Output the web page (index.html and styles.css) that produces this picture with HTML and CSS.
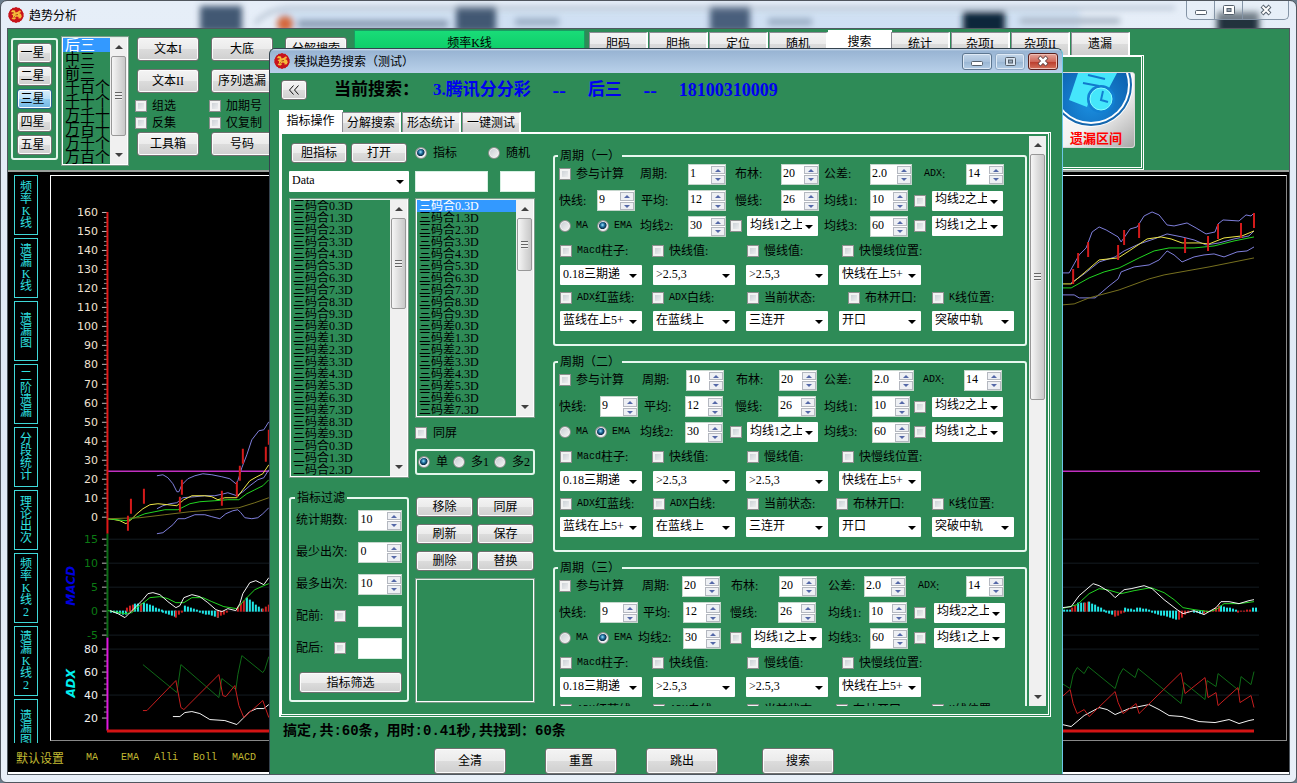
FILE: index.html
```html
<!DOCTYPE html>
<html lang="zh-CN">
<head>
<meta charset="utf-8">
<title>趋势分析</title>
<link rel="stylesheet" href="styles.css">
</head>
<body>
<svg class="defs" width="0" height="0" aria-hidden="true">
  <symbol id="logo" viewBox="0 0 16 16">
    <circle cx="8" cy="8" r="7.6" fill="#c8141c"/>
    <path d="M8 0l1.500 1 1.800-.2 1 1.500 1.700.8.3 1.900 1.300 1.300-.5 1.700.5 1.700-1.300 1.400-.3 1.800-1.700.8-1 1.500-1.800-.2L8 16l-1.500-1-1.800.2-1-1.500-1.700-.8-.3-1.800L.4 9.700.9 8 .4 6.300 1.700 5 2 3.100l1.700-.8 1-1.500 1.800.2z" fill="#c8141c"/>
    <path d="M3 4.500l1.500-1.500 2.500.5.5 2 2-.5 2-1.500 1.500.5-.5 1.500-1.500.5 2 1 .8 2.500-1.300 2-2.500-.2.8-1.300-2.300-.5-1.500 1.300 1 .7-1.500 1-3-.5 1.500-2L5 8.300 3.500 7.500l1.500-1z" fill="#f6b93a"/>
    <path d="M4 5.500l2 .5M7.500 8l2.500-.5M5.500 10.500l1.500-1" stroke="#8a1a10" stroke-width=".7"/>
  </symbol>
</svg>
<main class="window">
  <header class="titlebar">
    <svg class="glass" aria-hidden="true">
      <filter id="soft" x="-50%" y="-50%" width="200%" height="200%"><feGaussianBlur stdDeviation="3"/></filter>
      <rect y="10" x="280" width="800" height="30" fill="#bdd5ee" opacity=".55" filter="url(#soft)"/>
      <g filter="url(#soft)">
        <rect x="200" y="6" width="42" height="26" fill="#435873"/>
        <rect x="456" y="6" width="40" height="26" fill="#435873"/>
        <rect x="710" y="6" width="40" height="26" fill="#4a5f7c"/>
        <rect x="963" y="12" width="42" height="22" fill="#10283a"/>
        <rect x="1217" y="12" width="42" height="22" fill="#22323d"/>
        <circle cx="285" cy="24" r="8" fill="#d4663a"/>
        <rect x="298" y="20" width="150" height="8" fill="#8b9db4"/>
        <rect x="515" y="18" width="44" height="8" fill="#9db0c6"/>
        <rect x="768" y="18" width="44" height="8" fill="#9db0c6"/>
        <rect x="1020" y="18" width="100" height="6" fill="#a8b5c4"/>
        <path d="M255 24q12-16 40-16h880" fill="none" stroke="#8d9db0" stroke-width="2"/>
      </g>
    </svg>
    <svg class="logo" aria-hidden="true"><use href="#logo"/></svg>
    <h1>趋势分析</h1>
    <div class="caption main-caption">
      <button aria-label="最小化"><svg viewBox="0 0 14 12"><rect x="1.500" y="6.500" width="11" height="4" rx="1" fill="#fff" stroke="#55606c"/></svg></button>
      <button aria-label="最大化"><svg viewBox="0 0 14 12"><rect x="1.500" y="1.500" width="11" height="9" rx="1" fill="#fff" stroke="#55606c"/><rect x="5" y="4.500" width="4" height="3" fill="#9aa6b4" stroke="#55606c"/></svg></button>
      <button class="wide" aria-label="关闭"><svg viewBox="0 0 14 12"><path d="M3 2l8 8M11 2l-8 8" stroke="#55606c" stroke-width="4"/><path d="M3.500 2.500l7 7M10.500 2.500l-7 7" stroke="#fff" stroke-width="2"/></svg></button>
    </div>
  </header>

  <div class="client">
    <section class="toolbar">
      <div class="stars">
        <button>一星</button><button>二星</button><button class="on">三星</button><button>四星</button><button>五星</button>
      </div>
      <div class="listbox positions">
        <ul role="listbox" aria-label="位置">
          <li class="sel">后三</li><li>中三</li><li>前三</li><li>千百个</li><li>千十个</li><li>万千十</li><li>万百十</li><li>万千个</li><li>万百个</li>
        </ul>
        <div class="scroll thumb-pos"><i class="up"></i><b></b><i class="down"></i></div>
      </div>
      <div class="tools">
        <button>文本I</button><button>文本II</button>
        <div class="checks"><label><input type="checkbox">组选</label><label><input type="checkbox">反集</label></div>
        <button>工具箱</button>
      </div>
      <div class="tools">
        <button>大底</button><button>序列遗漏</button>
        <div class="checks"><label><input type="checkbox">加期号</label><label><input type="checkbox">仅复制</label></div>
        <button>号码</button>
      </div>
      <div class="tools narrow"><button>分解搜索</button></div>
      <button class="green-bar">频率K线</button>
      <div class="tabset top-tabs">
        <nav class="tabs">
          <button>胆码</button><button>胆拖</button><button>定位</button><button>随机</button><button class="current">搜索</button><button>统计</button><button>杂项I</button><button>杂项II</button><button>遗漏</button>
        </nav>
        <div class="tabpanel">
          <button class="picture">
            <svg viewBox="0 0 90 74" preserveAspectRatio="xMaxYMin slice" aria-hidden="true">
              <defs>
                <linearGradient id="metal" x1="0" y1="0" x2="1" y2="1"><stop offset="0" stop-color="#fff"/><stop offset=".6" stop-color="#f2f2f2"/><stop offset="1" stop-color="#a8a8a8"/></linearGradient>
                <radialGradient id="blue" cx=".5" cy=".75" r=".7"><stop offset="0" stop-color="#1b8fe0"/><stop offset="1" stop-color="#0a5aa8"/></radialGradient>
              </defs>
              <rect width="90" height="74" fill="url(#metal)"/>
              <circle cx="47" cy="12" r="42" fill="#fff"/>
              <circle cx="47" cy="12" r="41" fill="#1467ae"/>
              <circle cx="47" cy="12" r="39" fill="#fff"/>
              <circle cx="47" cy="12" r="37" fill="url(#blue)"/>
              <path d="M34 0H73L65 15H49L43 34 25 27z" fill="#45e6fb"/>
              <path d="M44 2l17 4M39 10l16 3" stroke="#1179cc" stroke-width="2"/>
              <circle cx="57" cy="26" r="14" fill="#127fd2"/>
              <circle cx="57" cy="26" r="11" fill="#45e6fb" stroke="#8ff" stroke-width="1"/>
              <path d="M59 18l-2 9 7 2" fill="none" stroke="#127fd2" stroke-width="2"/>
            </svg>
            <span>遗漏区间</span>
          </button>
        </div>
      </div>
    </section>

    <section class="workspace">
      <nav class="side">
        <button>频率K线</button><button>遗漏K线</button><button>遗漏图</button><button>二阶遗漏</button><button>分段统计</button><button>理论出次</button><button class="tall">频率K线2</button><button class="tall">遗漏K线2</button><button class="cut">遗漏图</button>
      </nav>
      <div class="chart">
        <svg id="plot" viewBox="51 176 1236 566" preserveAspectRatio="xMinYMin meet" role="img" aria-label="走势图">
          <g stroke="#141c22"><path d="M109 539.500H1260M109 563.500H1260M109 587.500H1260M109 611.500H1260M109 635.500H1260M109 649.500H1260M109 695.500H1260"/></g>
          <path d="M108 471.500H1261" stroke="#c030c0" stroke-width="1.500"/>
          <g id="axis"></g>
          <path d="M107.500 212V534" stroke="#e01818" stroke-width="2"/>
          <path d="M107.500 534V638" stroke="#0b6a14" stroke-width="2"/>
          <path d="M107.500 638V731" stroke="#e018e0" stroke-width="2"/>
          <path d="M107 731.500H1255" stroke="#d41414" stroke-width="3"/>
          <g id="bars"></g>
          <g class="lines">
            <g stroke="#7f7fdc">
              <polyline points="157,476 163,475 168,478 173,484 177,492 179,492 182,485 188,479 195,476 203,474 212,475 222,477 230,479 236,484 238,481 242,468 247,455 252,440 259,431 264,430 269,422"/>
              <polyline points="157,509 163,506 170,504 177,503 183,498 195,497 205,496 215,496 224,494 228,493 237,496 243,492 250,486 258,480 264,478 269,470"/>
              <polyline points="157,534 163,533 168,529 173,525 178,519 185,519 195,515 205,515 212,517 220,519 226,514 233,511 238,510 241,513 245,518 252,519 258,518 263,514 269,508"/>
              <polyline points="1063,273 1070,273 1075,264 1080,255 1087,248 1093,232 1100,227 1107,230 1119,237 1122,242 1131,229 1138,227 1145,216 1153,212 1160,215 1168,225 1175,226 1188,223 1197,228 1207,234 1216,232 1219,224 1224,220 1240,221 1247,215 1252,216 1255,213"/>
              <polyline points="1072,283 1085,274 1100,262 1116,257 1125,251 1140,244 1155,239 1168,234 1183,237 1195,240 1207,245 1220,243 1235,239 1250,236 1255,231"/>
              <polyline points="1063,295 1075,295 1080,298 1096,298 1103,292 1110,286 1119,279 1122,272 1135,267 1150,265 1160,260 1168,251 1175,255 1183,262 1195,257 1205,255 1215,254 1225,257 1238,252 1248,251 1255,247"/>
            </g>
            <g stroke="#f0e848">
              <polyline points="108,519 115,520 120,521 126,524 131,520 137,514 143,509 150,505 158,504 168,505 177,506 184,500 192,496 205,496 212,497 218,500 225,498 237,498 243,490 250,481 257,477 263,474 269,465"/>
              <polyline points="1063,284 1072,284 1085,273 1100,260 1119,258 1130,251 1148,239 1162,237 1172,239 1183,243 1200,243 1210,244 1225,238 1243,236 1255,231"/>
            </g>
            <g stroke="#22d622">
              <polyline points="108,519 126,521 135,518 145,514 155,512 165,510 178,510 190,504 200,502 215,501 228,500 239,500 247,494 255,490 263,486 269,480"/>
              <polyline points="1063,288 1072,288 1090,278 1105,272 1120,268 1140,258 1155,251 1170,248 1195,248 1215,246 1235,241 1255,237"/>
              <polyline points="108,611 125,614 132,613 137,608 145,602 150,598 160,597 168,599 176,603 184,603 192,598 203,598 212,602 224,607 237,609 245,600 255,590 264,586 269,584"/>
              <polyline points="1063,609 1078,605 1090,594 1100,589 1108,590 1122,594 1135,591 1152,588 1165,593 1175,600 1184,608 1195,610 1210,612 1217,610 1225,604 1240,604 1255,602"/>
            </g>
            <g stroke="#77701f">
              <polyline points="108,519 140,518 165,515 190,512 215,510 239,508 255,503 269,498"/>
              <polyline points="1063,305 1075,304 1090,298 1120,290 1150,279 1165,275 1210,267 1255,258"/>
            </g>
            <g stroke="#f4f4f4">
              <polyline points="110,611 118,614 125,618 130,613 137,606 143,600 148,594 153,593 160,595 168,602 176,608 180,606 184,598 192,595 200,597 208,603 216,610 222,612 228,609 236,611 240,604 243,594 250,583 256,581 260,583 264,585 269,578"/>
              <polyline points="1063,608 1072,607 1080,596 1094,584 1100,586 1110,592 1116,598 1125,590 1132,589 1145,586 1153,589 1165,600 1178,610 1184,614 1195,611 1205,615 1210,612 1217,608 1222,602 1230,602 1240,604 1250,601 1255,600"/>
              <polyline points="173,717 180,717 185,713 192,712 200,714 210,720 225,721 237,725 243,719 250,712 257,709 264,709 269,705"/>
              <polyline points="1063,725 1072,727 1085,716 1100,708 1108,710 1116,715 1130,709 1150,705 1160,710 1170,716 1183,717 1200,722 1216,723 1230,720 1240,724 1250,721 1255,720"/>
            </g>
            <g stroke="#0f6a17">
              <polyline points="143,665 177,693 181,665 219,698 222,679 236,690 238,675 242,656 263,673 265,670 269,657"/>
              <polyline points="1063,684 1071,689 1074,675 1078,668 1085,674 1089,667 1116,689 1120,676 1124,669 1136,678 1139,669 1182,704 1185,683 1206,700 1208,681 1217,687 1219,674 1240,691 1242,677 1252,685 1255,672"/>
            </g>
            <g stroke="#c81e1e">
              <polyline points="143,711 147,711 176,681 181,708 184,710 219,675 223,696 226,697 235,686 239,706 244,718 263,701 269,718"/>
              <polyline points="1063,697 1071,690 1074,704 1078,714 1085,710 1090,717 1116,692 1119,703 1124,714 1137,704 1140,714 1182,673 1186,694 1206,678 1209,698 1217,693 1219,706 1239,688 1241,703 1252,696 1255,708"/>
            </g>
          </g>
          <path d="M128 516v15M131 499v15M144 489v15M180 497v15M182 480v15M222 491v15M237 482v15M240 466v15M243 449v15M266 447v15M269 430v15M1074 269v15M1079 253v15M1089 242v15M1119 245v15M1125 230v15M1140 223v15M1186 238v15M1209 236v15M1219 224v15M1242 223v15M1255 213v15" stroke="#d41a1a" stroke-width="2"/>
          <text class="axis-name" transform="translate(75 606) rotate(-90)" fill="#0000e0">MACD</text>
          <text class="axis-name" transform="translate(75 698) rotate(-90)" fill="#00f0f0">ADX</text>
        </svg>
      </div>
      <footer class="links">
        <button class="cn">默认设置</button><button>MA</button><button>EMA</button><button>Alli</button><button>Boll</button><button>MACD</button>
      </footer>
    </section>

    <section class="dialog" role="dialog" aria-label="模拟趋势搜索（测试）">
      <header class="dialog-title">
        <svg class="logo" aria-hidden="true"><use href="#logo"/></svg>
        <h2>模拟趋势搜索（测试）</h2>
        <div class="caption">
          <button aria-label="最小化"><svg viewBox="0 0 14 12"><rect x="1.500" y="6.500" width="11" height="4" rx="1" fill="#fff" stroke="#55606c"/></svg></button>
          <button class="dim" aria-label="最大化"><svg viewBox="0 0 14 12"><rect x="2.500" y="2.500" width="10" height="8" rx="1" fill="#dbe6f2" stroke="#55606c"/><rect x="5.500" y="5" width="4" height="3" fill="#9ab" stroke="#55606c"/></svg></button>
          <button class="close" aria-label="关闭"><svg viewBox="0 0 14 12"><path d="M3 2l8 8M11 2l-8 8" stroke="#5c4040" stroke-width="4"/><path d="M3.500 2.500l7 7M10.500 2.500l-7 7" stroke="#fff" stroke-width="2.500"/></svg></button>
        </div>
      </header>
      <div class="heading">
        <button class="back" aria-label="收起"><svg viewBox="0 0 12 10"><path d="M5.500.5L1.500 5l4 4.500M10.500.5L6.500 5l4 4.500" fill="none" stroke="#111"/></svg></button>
        <strong>当前搜索：</strong>
        <strong class="query"><span>3.腾讯分分彩</span><span>--</span><span>后三</span><span>--</span><span class="issue">18100310009</span></strong>
      </div>
      <div class="tabset dialog-tabs">
        <nav class="tabs">
          <button class="current">指标操作</button><button>分解搜索</button><button>形态统计</button><button>一键测试</button>
        </nav>
        <div class="tabpanel">
          <div class="column">
            <div class="pair"><button>胆指标</button><button>打开</button></div>
            <span class="combo data"><select aria-label="数据"><option>Data</option></select></span>
            <div class="listbox long"><ul role="listbox" id="list-a" aria-label="全部指标"></ul><div class="scroll thumb-a"><i class="up"></i><b></b><i class="down"></i></div></div>
            <fieldset class="filter">
              <legend>指标过滤</legend>
              <div class="line"><label for="f1">统计期数:</label><span class="spin"><input id="f1" type="text" value="10"><span><button aria-label="加"></button><button aria-label="减"></button></span></span></div>
              <div class="line"><label for="f2">最少出次:</label><span class="spin"><input id="f2" type="text" value="0"><span><button aria-label="加"></button><button aria-label="减"></button></span></span></div>
              <div class="line"><label for="f3">最多出次:</label><span class="spin"><input id="f3" type="text" value="10"><span><button aria-label="加"></button><button aria-label="减"></button></span></span></div>
              <div class="line"><label for="f4">配前:</label><input id="f4" type="checkbox"><input class="box" type="text" aria-label="配前"></div>
              <div class="line"><label for="f5">配后:</label><input id="f5" type="checkbox"><input class="box" type="text" aria-label="配后"></div>
              <button class="run">指标筛选</button>
            </fieldset>
          </div>
          <div class="column">
            <div class="radios"><label><input type="radio" name="kind" checked>指标</label><label><input type="radio" name="kind">随机</label></div>
            <div class="inputs"><input class="box wide" type="text" aria-label="关键字"><input class="box" type="text" aria-label="数量"></div>
            <div class="listbox short"><ul role="listbox" id="list-b" aria-label="已选指标"></ul><div class="scroll thumb-b"><i class="up"></i><b></b><i class="down"></i></div></div>
            <label class="same"><input type="checkbox">同屏</label>
            <div class="modes"><label><input type="radio" name="mode" checked>单</label><label><input type="radio" name="mode">多1</label><label><input type="radio" name="mode">多2</label></div>
            <div class="actions"><button>移除</button><button>同屏</button><button>刷新</button><button>保存</button><button>删除</button><button>替换</button></div>
            <div class="listbox result"></div>
          </div>
          <div class="periods"><div class="period-list" id="periods"></div><div class="scroll thumb-p"><i class="up"></i><b></b><i class="down"></i></div></div>
        </div>
      </div>
      <p class="status">搞定,共:60条，用时:0.41秒,共找到：60条</p>
      <div class="bottom-buttons"><button>全清</button><button>重置</button><button>跳出</button><button>搜索</button></div>
    </section>
  </div>
</main>
<script src="app.js"></script>
</body>
</html>
```
FILE: styles.css
```css
* { box-sizing: border-box; }
html, body { height: 100%; }
body {
  margin: 0;
  overflow: hidden;
  background: #6b7d8c;
  font: 12px/14px "Liberation Serif", "Noto Sans CJK SC", serif;
  color: #000;
}
button, input, select { font: inherit; color: inherit; margin: 0; padding: 0; }
h1, h2, p, ul { margin: 0; padding: 0; font-weight: 400; list-style: none; }
.defs { position: absolute; }
.mono { font-family: "Liberation Mono", monospace; font-size: 10px; }

button {
  border: 1px solid #707070;
  border-radius: 3px;
  background: linear-gradient(#f4f4f4, #ebebeb 50%, #dcdcdc 51%, #cfcfcf);
  box-shadow: inset 0 0 0 1px #fcfcfc;
  white-space: nowrap;
  overflow: hidden;
}

/* windows */
.window {
  position: relative;
  display: flex;
  flex-direction: column;
  height: 100vh;
  padding: 0 6px 7px;
  border: 1px solid #50565e;
  border-radius: 7px 7px 6px 6px;
  background: linear-gradient(#e6eef8, #dfe9f5 60%, #e9f0f8);
  overflow: hidden;
}
.titlebar { position: relative; display: flex; align-items: center; height: 27px; flex: none; }
.glass { position: absolute; left: -7px; top: -1px; width: 1297px; height: 28px; }
.logo { position: relative; width: 16px; height: 16px; flex: none; }
.titlebar .logo { margin-left: 1px; }
.titlebar h1 { position: relative; margin-left: 5px; font-size: 12px; font-family: "Noto Sans CJK SC", sans-serif; }
.caption { display: flex; margin-left: auto; }
.caption button { display: flex; align-items: center; justify-content: center; }
.caption svg { width: 14px; height: 12px; }
.main-caption { position: relative; align-self: flex-start; margin-right: 1px; border: 1px solid #8494a6; border-top: 0; border-radius: 0 0 5px 5px; background: #e8f0f866; overflow: hidden; }
.main-caption button { width: 28px; height: 18px; border: 0; border-right: 1px solid #8494a6; border-radius: 0; background: none; box-shadow: none; }
.main-caption .wide { width: 45px; border-right: 0; }

.client {
  position: relative;
  flex: 1;
  display: flex;
  flex-direction: column;
  border: 1px solid #505860;
  background: #2e8b57;
  overflow: hidden;
}

/* toolbar */
.toolbar { display: flex; align-items: flex-start; height: 141px; flex: none; padding-left: 3px; }
.stars { display: flex; flex-direction: column; gap: 3px; width: 47px; height: 122px; margin-top: 9px; padding: 3px 4px; border: 2px solid #e4f6ec; border-radius: 3px; }
.stars button { height: 20px; padding-right: 4px; line-height: 18px; }
.stars .on { background: linear-gradient(#d8eefb, #b9e0f7 50%, #94cdf0 51%, #72b7e4); border-color: #2c628b; }
.listbox { display: flex; border: 2px solid #fff; border-top-color: #dff0e6; outline: 1px solid #7b9a89; outline-offset: -1px; overflow: hidden; }
.listbox ul { flex: 1; padding-left: 2px; overflow: hidden; white-space: nowrap; }
.listbox li { height: 12px; line-height: 12px; margin-left: -2px; padding-left: 2px; }
.listbox .sel { background: #3399ff; color: #fff; }
.positions { width: 68px; height: 130px; margin: 7px 8px 0 3px; }
.positions li { height: 14px; line-height: 14px; font-size: 15px; }
.tools { display: flex; flex-direction: column; width: 62px; margin: 8px 12px 0 0; }
.tools > button { height: 24px; margin-bottom: 8px; }
.tools.narrow { margin-right: 7px; }
.checks { display: flex; flex-direction: column; gap: 3px; height: 33px; margin: -2px 0 0; }
.checks label { display: flex; align-items: center; gap: 5px; height: 14px; margin-left: -2px; white-space: nowrap; }
.green-bar { width: 231px; height: 26px; margin: 1px 4px 0 0; border: 1px solid #1a9c62; border-radius: 0; background: linear-gradient(#19dc78, #0bc964); box-shadow: none; }

/* tabs */
.tabset { display: flex; flex-direction: column; }
.tabs { display: flex; align-items: flex-end; gap: 1px; }
.tabs button { width: 59px; height: 20px; border: 2px solid #fff; border-color: #8c8c94 #fff #8c8c94 #8c8c94; border-width: 1px 2px 0 1px; border-radius: 0; background: linear-gradient(#f4f4f4, #ebebeb 50%, #dcdcdc 51%, #cfcfcf); box-shadow: none; }
.tabs .current { width: 64px; height: 22px; margin: 0 -2px 0 -1px; padding-bottom: 2px; border-color: #fff; background: #fff; }
.tabpanel { border: 3px double #fff; border-top: 2px solid #fff; }
.top-tabs { width: 555px; margin-top: 1px; }
.top-tabs .tabs { height: 25px; }
.top-tabs .tabs button { height: 23px; }
.top-tabs .tabs .current { height: 25px; }
.top-tabs .tabpanel { display: flex; justify-content: flex-end; height: 115px; padding: 15px 6px 0; }
.picture { position: relative; width: 90px; height: 76px; border-color: #d8d8d8; background: #eee; }
.picture svg { display: block; width: 100%; height: 74px; }
.picture span { position: absolute; left: 0; right: -12px; bottom: 1px; color: #f00; font-weight: 700; font-size: 13px; line-height: 14px; }

/* chart */
.workspace {
  display: grid;
  grid-template: 1fr 29px / 41px 1fr;
  flex: 1;
  min-height: 0;
  padding: 4px 2px 0 0;
  border-bottom: 2px solid #fff;
  background: #000;
  box-shadow: inset 0 2px 0 #9aa09c;
}
.side { display: flex; flex-direction: column; gap: 3px; padding: 1px 0 0 6px; min-height: 0; overflow: hidden; }
.side button { display: flex; align-items: center; flex: none; width: 24px; height: 60px; padding: 0 5px; border: 1px solid #3fd8d8; border-radius: 0; background: #000; box-shadow: none; color: #2fe0e0; line-height: 12px; white-space: normal; word-break: break-all; text-align: center; }
.side .tall { height: 70px; }
.side .cut { height: 58px; }
.chart { min-width: 0; min-height: 0; margin: 1px 0 2px 1px; border: 1px solid #fff; border-right-color: #888; border-bottom-color: #888; overflow: hidden; }
.chart svg { display: block; width: 100%; height: auto; }
.chart text { font: 11px "DejaVu Sans", sans-serif; }
.chart .axis-name { font-size: 12px; font-weight: 700; font-style: italic; }
.lines { fill: none; stroke-width: 1; stroke-linejoin: round; }
.links { grid-column: 1 / 3; display: flex; align-items: center; gap: 15px; padding-left: 8px; }
.links button { border: 0; background: none; box-shadow: none; color: #c2ba32; font: 10px/14px "Liberation Mono", monospace; }
.links .cn { margin-right: 7px; font: 12px/14px "Noto Sans CJK SC", sans-serif; }
.links button:nth-child(2) { margin-right: 8px; }

/* dialog */
.dialog {
  position: absolute;
  left: 261px;
  top: 19px;
  bottom: 0;
  width: 794px;
  display: flex;
  flex-direction: column;
  padding: 0 2px;
  border: 1px solid #34424e;
  border-right-color: #6cc8e8;
  border-bottom: 0;
  border-radius: 6px 6px 0 0;
  background: #2e8b57;
  overflow: hidden;
}
.dialog-title { display: flex; align-items: center; flex: none; height: 24px; margin: 0 -2px; padding: 0 4px; background: linear-gradient(#d4e3f2, #98b4d3 2px, #b9d1ea); }
.dialog-title h2 { margin-left: 4px; font: 12px/14px "Noto Sans CJK SC", sans-serif; }
.dialog .caption { gap: 3px; }
.dialog .caption button { width: 30px; height: 17px; border-color: #5c7690; background: linear-gradient(#c3d6ea, #a9c2dc 50%, #98b5d2 51%, #b4cde6); box-shadow: inset 0 0 0 1px #dfeaf6; }
.dialog .caption .dim { border-color: #8ea8c4; }
.dialog .caption .close { border-color: #5a1f1c; background: linear-gradient(#e3a79c, #d0685a 50%, #b93a2a 51%, #d4735e); box-shadow: inset 0 0 0 1px #f0c0b6; }
.heading { display: flex; align-items: center; flex: none; height: 37px; padding: 0 0 3px 9px; font-size: 17px; line-height: 20px; white-space: nowrap; }
.back { display: flex; align-items: center; justify-content: center; width: 26px; height: 20px; margin-right: 27px; }
.back svg { width: 12px; height: 10px; }
.heading strong { width: 99px; }
.heading .query { display: flex; gap: 20px; width: auto; color: #0000f0; }
.heading .query span:nth-child(2), .heading .query span:nth-child(4) { width: 17px; text-align: center; font-size: 20px; }
.heading .issue { font-size: 18px; }
.dialog-tabs { flex: 1; min-height: 0; margin: 0 9px 0 7px; }
.dialog-tabs .tabpanel { flex: 1; min-height: 0; display: flex; padding: 2px 2px 0 7px; border-left: 3px solid #fff; }
.dialog-tabs .tabs .current { margin-left: 0; }
.column { display: flex; flex-direction: column; flex: none; width: 120px; margin-right: 6px; padding-top: 7px; }
.column + .column { margin-right: 18px; }
.pair { display: grid; grid-template-columns: 1fr 1fr; gap: 4px; height: 20px; padding: 0 2px; }
.data { margin: 8px 0 6px; }
.combo { position: relative; display: flex; height: 21px; background: #fff; border-radius: 1px; overflow: hidden; }
.combo select { appearance: none; flex: 1; width: 100%; padding: 0 16px 2px 3px; border: 0; background: none; line-height: 17px; overflow: hidden; text-overflow: clip; }
.combo::after { content: ""; position: absolute; right: 5px; top: 9px; border: 4px solid transparent; border-top-color: #000; border-bottom: 0; pointer-events: none; }
.long { height: 280px; margin-bottom: 14px; }
.short { height: 220px; flex: none; }
.box { width: 35px; height: 21px; border: 1px solid #d6efe1; background: #fff; }
.box.wide { width: 73px; }
.inputs { display: flex; justify-content: space-between; margin: 8px 0 6px; }
.radios { display: flex; gap: 25px; height: 20px; }
.radios label, .modes label, .same { display: flex; align-items: center; white-space: nowrap; }
.radios input, .modes input, .same input { margin-right: 6px; }
.radios label { margin-right: 6px; }
.same { height: 20px; margin: 5px 0 6px; }
.modes { display: flex; align-items: center; gap: 5px; height: 26px; padding-left: 1px; border: 2px solid #e4f6ec; border-radius: 3px; }
.actions { display: grid; grid-template-columns: 1fr 1fr; grid-auto-rows: 20px; gap: 7px 4px; margin: 22px 0 7px; padding: 0 1px; }
.result { flex: 1; margin-bottom: 11px; }

input[type="checkbox"], input[type="radio"] { appearance: none; flex: none; width: 12px; height: 12px; border: 1px solid #8e8f8f; background: linear-gradient(135deg, #c4cad0, #f6f6f6); box-shadow: inset 0 0 0 2px #f2f2f2; }
input[type="radio"] { border-radius: 50%; box-shadow: inset 0 0 0 1px #f2f2f2; }
input[type="radio"]:checked { background: radial-gradient(circle at 45% 40%, #9be4ff 0, #1f6d9c 25%, #0b3048 45%, #e8eef2 55%); }

.spin { display: flex; width: 38px; height: 21px; border: 1px solid #c4d6cc; background: #fff; }
.spin.w { width: 42px; }
.spin > input { flex: 1; width: 0; padding: 0 0 3px 1px; border: 0; background: none; }
.spin > span { display: flex; flex-direction: column; gap: 1px; width: 14px; padding-top: 1px; }
.spin button { position: relative; flex: 1; border: 1px solid #b4b8c0; border-radius: 0; background: #eef0f4; box-shadow: none; }
.spin button::before { content: ""; position: absolute; left: 3px; top: 2px; border: 3px solid transparent; border-top: 0; border-bottom-color: #5468a8; }
.spin button + button::before { border-bottom: 0; border-top: 3px solid #5468a8; }

fieldset { min-width: 0; margin: 0; padding: 0 4px; border: 2px solid #e8f8f0; border-radius: 3px; }
legend { height: 12px; margin-left: -1px; padding: 0 2px; line-height: 12px; }
.filter { padding: 0 5px 7px; }
.filter .line { display: flex; align-items: center; height: 32px; }
.filter label { width: 63px; white-space: nowrap; }
.filter label:has(+ input) { width: 39px; }
.filter .spin { width: 44px; }
.filter .box { width: 44px; margin-left: 12px; }
.filter .run { display: block; width: 103px; height: 21px; margin: 8px 0 0 3px; }

.periods { display: flex; flex: 1; min-width: 0; overflow: hidden; margin-bottom: 8px; }
.period-list { display: flex; flex-direction: column; gap: 10px; width: 474px; padding-top: 14px; margin-right: 2px; overflow: hidden; }
.period { flex: none; height: 196px; }
.row { display: grid; align-items: center; white-space: nowrap; }
.row label { display: flex; align-items: center; }
.row label input { margin-right: 5px; }
.r1 { height: 24px; }
.r2 { height: 29px; }
.r3 { height: 22px; }
.r4 { height: 28px; }
.r6 { height: 26px; }
.r4, .r5, .r6, .r7 { margin-left: 1px; }
.r5, .r7 { grid-template-columns: repeat(5, 82px); gap: 11px; }
.r4 { grid-template-columns: 92px 95px 95px auto; }
.r6 { grid-template-columns: 93px 94px 89px 96px auto; }
.row .combo { width: 71px; height: 20px; }
.r5 .combo, .r7 .combo { width: 82px; }
.p1 .r1 { grid-template-columns: 81px 48px 47px 46px 43px 46px 54px 42px auto; }
.p1 .r2 { grid-template-columns: 38px 44px 47px 47px 46px 43px 46px 44px 18px auto; }
.p1 .r3 { grid-template-columns: 38px 43px 48px 42px 17px 77px 46px 44px 18px auto; }
.p1 .r6 { grid-template-columns: 92px 95px 101px 84px auto; }
.p2 .r1 { grid-template-columns: 83px 44px 50px 43px 45px 48px 51px 41px auto; }
.p2 .r2 { grid-template-columns: 41px 44px 41px 50px 43px 46px 48px 42px 18px auto; }
.p2 .r3 { grid-template-columns: 36px 45px 45px 45px 17px 77px 48px 42px 18px auto; }
.p3 .r1 { grid-template-columns: 83px 40px 49px 48px 49px 36px 54px 48px auto; }
.p3 .r2 { grid-template-columns: 41px 43px 40px 47px 48px 50px 41px 45px 20px auto; }
.p3 .r3 { grid-template-columns: 38px 41px 45px 47px 21px 77px 42px 44px 20px auto; }

.scroll { display: flex; flex-direction: column; align-items: center; flex: none; width: 17px; background: #f0f0f0; }
.scroll i { width: 0; height: 0; margin: 7px 0; border: 4px solid transparent; flex: none; }
.scroll .up { border-top: 0; border-bottom-color: #404040; }
.scroll .down { margin-top: auto; border-bottom: 0; border-top-color: #404040; }
.scroll b { display: flex; align-items: center; justify-content: center; width: 15px; border: 1px solid #989898; border-radius: 2px; background: linear-gradient(90deg, #f6f6f6, #dedede 50%, #c8c8c8); }
.scroll b::before { content: ""; width: 7px; height: 8px; background: repeating-linear-gradient(#666 0 1px, #eee 1px 3px); }
.thumb-pos b { height: 80px; }
.thumb-a b { height: 91px; }
.thumb-b b { height: 53px; }
.thumb-p b { height: 246px; }

.status { flex: none; height: 31px; padding-left: 11px; font: 700 14px/28px "Liberation Mono", "Noto Sans CJK SC", monospace; }
.bottom-buttons { display: flex; flex: none; height: 26px; padding-left: 162px; gap: 39px; }
.bottom-buttons button { width: 72px; height: 26px; }
.bottom-buttons button:nth-child(3) { margin-left: -10px; }
.bottom-buttons button:last-child { margin-left: 5px; }
```
FILE: app.js
```js
const listItems = [];
for (let i = 0; i < 10; i++) listItems.push(`三码合${i}.3D`);
for (let i = 0; i < 10; i++) listItems.push(`三码差${i}.3D`);
for (let i = 0; i < 3; i++) listItems.push(`二码合${i}.3D`);
const asItems = (items, selected) =>
  items.map((t, i) => `<li${i === selected ? ' class="sel"' : ''}>${t}</li>`).join('');
document.getElementById('list-a').innerHTML = asItems(listItems, -1);
document.getElementById('list-b').innerHTML = asItems(listItems.slice(0, 18), 0);

const mono = t => t.replace(/[A-Za-z]+/g, m => `<span class="mono">${m}</span>`);
const spin = (id, v, cls = '') =>
  `<span class="spin ${cls}"><input id="${id}" type="text" value="${v}"><span><button aria-label="加"></button><button aria-label="减"></button></span></span>`;
const field = (id, name, v, cls) => `<label for="${id}">${mono(name)}:</label>${spin(id, v, cls)}`;
const check = t => `<label><input type="checkbox">${mono(t)}</label>`;
const tick = t => `<input type="checkbox" aria-label="${t}">`;
const combo = t => `<span class="combo"><select aria-label="${t}"><option>${t}</option></select></span>`;
const radio = (n, t, on) => `<label><input type="radio" name="avg${n}"${on ? ' checked' : ''}><span class="mono">${t}</span></label>`;

const periods = [['一', '1'], ['二', '10'], ['三', '20']];
document.getElementById('periods').innerHTML = periods.map(([name, cycle], k) => {
  const n = k + 1, id = s => `p${n}${s}`;
  return `<fieldset class="period p${n}"><legend>周期（${name}）</legend>
  <div class="row r1">${check('参与计算')}${field(id('a'), '周期', cycle)}${field(id('b'), '布林', 20)}${field(id('c'), '公差', '2.0', 'w')}${field(id('d'), 'ADX', 14)}</div>
  <div class="row r2">${field(id('e'), '快线', 9)}${field(id('f'), '平均', 12)}${field(id('g'), '慢线', 26)}${field(id('h'), '均线1', 10)}${tick('均线1')}${combo('均线2之上')}</div>
  <div class="row r3">${radio(n, 'MA')}${radio(n, 'EMA', true)}${field(id('i'), '均线2', 30)}${tick('均线2')}${combo('均线1之上')}${field(id('j'), '均线3', 60)}${tick('均线3')}${combo('均线1之上')}</div>
  <div class="row r4">${['Macd柱子:', '快线值:', '慢线值:', '快慢线位置:'].map(check).join('')}</div>
  <div class="row r5">${['0.18三期递', '>2.5,3', '>2.5,3', '快线在上5+'].map(combo).join('')}</div>
  <div class="row r6">${['ADX红蓝线:', 'ADX白线:', '当前状态:', '布林开口:', 'K线位置:'].map(check).join('')}</div>
  <div class="row r7">${['蓝线在上5+', '在蓝线上', '三连开', '开口', '突破中轨'].map(combo).join('')}</div>
  </fieldset>`;
}).join('');

/* axis ticks and labels */
let axis = '';
const scale = (from, to, step, y0, dy, color) => {
  for (let v = from, i = 0; v >= to; v -= step, i++) {
    const y = Math.round(y0 + i * dy);
    axis += `<path d="M102 ${y}.5h5" stroke="#bbb"/><text x="98" y="${y + 4}" text-anchor="end" fill="${color}">${v}</text>`;
    if (v > to) for (let m = 1; m < 4; m++) axis += `<path d="M104 ${Math.round(y + m * dy / 4)}.5h3" stroke="#888"/>`;
  }
};
scale(160, 0, 10, 212, 19.06, '#f0e0d0');
scale(15, -5, 5, 539, 24, '#0b7a14');
scale(80, 20, 20, 649, 23, '#f0f0f0');
document.getElementById('axis').innerHTML = axis;

/* histogram runs: start x, end x, first height, last height, colour */
const C = '#20e8e8', R = '#d02020';
const runs = [
  [111, 125, -1, -3, C], [127, 133, 3, 6, R], [135, 140, 7, 7, C], [141, 143, 7, 8, R], [144, 161, 8, 1, C],
  [163, 175, -1, -5, C], [176, 183, -6, -1, R], [185, 197, 5, 1, C], [200, 217, -1, -6, C], [218, 228, -6, -1, R],
  [238, 246, 4, 13, R], [247, 262, 13, 2, C], [263, 269, 2, 6, R],
  [1065, 1071, 1, 1, C], [1073, 1078, 3, 7, R], [1079, 1085, 8, 8, C], [1086, 1089, 8, 9, R], [1090, 1104, 9, 1, C],
  [1107, 1115, -1, -4, C], [1116, 1124, -5, -1, R], [1126, 1136, 3, 1, C], [1138, 1150, 3, 1, C],
  [1153, 1178, -1, -8, C], [1180, 1190, -8, -1, R], [1195, 1203, -1, -2, C], [1205, 1215, -2, 1, R],
  [1217, 1221, 3, 5, R], [1222, 1236, 5, 1, C], [1239, 1250, -1, 1, R], [1254, 1255, 3, 3, C]
];
let bars = '';
for (const [a, b, h1, h2, color] of runs) {
  const n = Math.max(1, Math.round((b - a) / 3));
  for (let i = 0; i <= n; i++) {
    const h = Math.round(h1 + (h2 - h1) * i / n);
    bars += `<rect x="${a + i * 3 - 1}" y="${h > 0 ? 611 - h : 611}" width="2" height="${Math.abs(h) + 1}" fill="${color}"/>`;
  }
}
document.getElementById('bars').innerHTML = bars;
```
